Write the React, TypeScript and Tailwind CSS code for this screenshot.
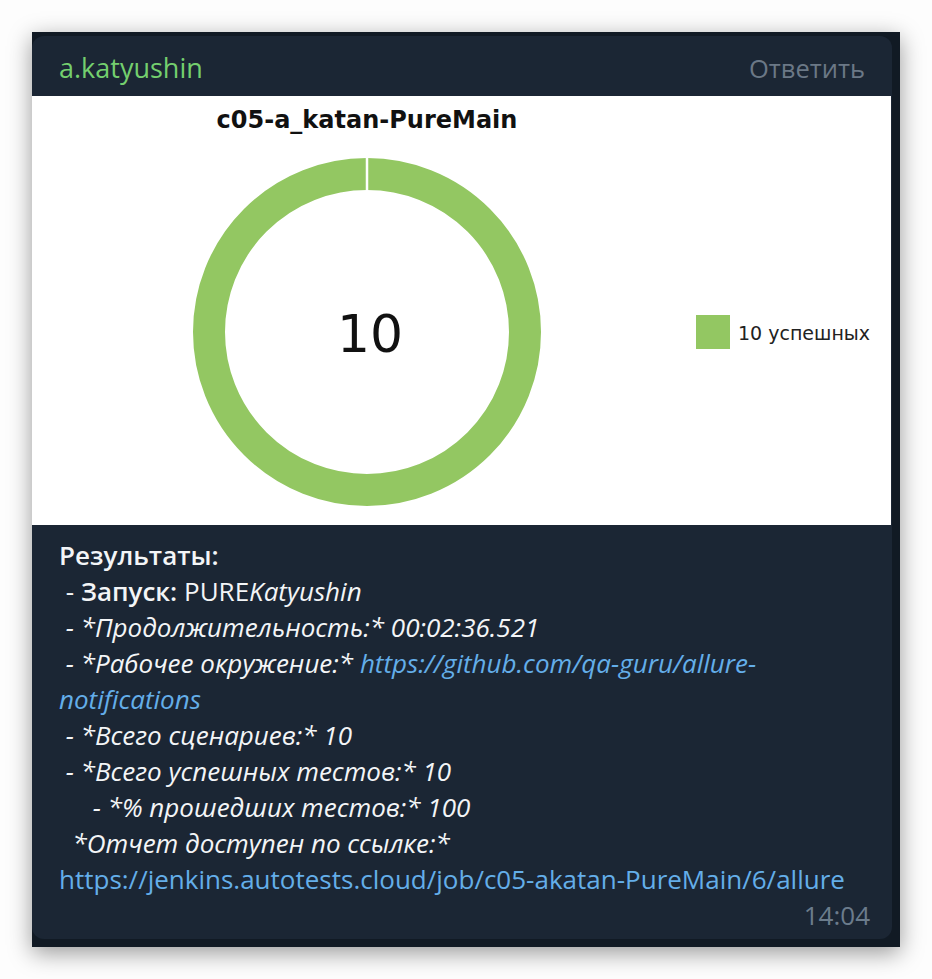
import React from 'react';

const GREEN = '#93c762';

function Chart(){
  return (
    <svg viewBox="0 0 859 429" width="859" height="429" className="block bg-white" style={{ fontFamily: '"DejaVu Sans", sans-serif' }}>
      <text x="335" y="32" textAnchor="middle" fontSize="24" fontWeight="700" fill="#111">c05-a_katan-PureMain</text>
      <circle cx="335" cy="236" r="158" fill="none" stroke={GREEN} strokeWidth="32" />
      <line x1="335" y1="60" x2="335" y2="96" stroke="#fff" strokeWidth="2.5" />
      <text x="338" y="256" textAnchor="middle" fontSize="52" fill="#111">10</text>
      <rect x="664" y="219" width="34" height="34" fill={GREEN} />
      <text x="706" y="244" fontSize="19" fill="#222">10 успешных</text>
    </svg>
  );
}

export default function App(){
  return (
    <div className="min-h-screen bg-[#fdfdfd] p-8" style={{ fontFamily: '"Open Sans", "Noto Sans", sans-serif' }}>
      <div className="w-[868px] bg-[#111a24] pt-1 pr-2 pb-2 shadow-[0_6px_22px_rgba(0,0,0,0.4)]">
        <div className="overflow-hidden rounded-xl bg-[#1b2634]">
          <header className="flex h-[60px] items-center justify-between pt-[4px] px-[27px]">
            <span className="text-[27px] text-[#74cf6e]">a.katyushin</span>
            <span className="text-[25.5px] text-[#6b7886]">Ответить</span>
          </header>

          <Chart />

          <div className="px-[27px] pt-[12px] pb-[6px] text-[26px] leading-[36px] text-[#f3f5f7] whitespace-pre-wrap">
            <div className="font-semibold">Результаты:</div>
            <div> - <span className="font-semibold">Запуск:</span> PURE<i>Katyushin</i></div>
            <div className="italic"> - *Продолжительность:* 00:02:36.521</div>
            <div className="italic"> - *Рабочее окружение:* <a href="#" className="text-[#64aee9]">https://github.com/qa-guru/allure-notifications</a></div>
            <div className="italic"> - *Всего сценариев:* 10</div>
            <div className="italic"> - *Всего успешных тестов:* 10</div>
            <div className="italic">     - *% прошедших тестов:* 100</div>
            <div className="italic">  *Отчет доступен по ссылке:*</div>
            <div><a href="#" className="text-[#64aee9]">https://jenkins.autotests.cloud/job/c05-akatan-PureMain/6/allure</a></div>
            <div className="-mr-[5px] text-right text-[26px] text-[#6b7c8c]">14:04</div>
          </div>
        </div>
      </div>
    </div>
  );
}
